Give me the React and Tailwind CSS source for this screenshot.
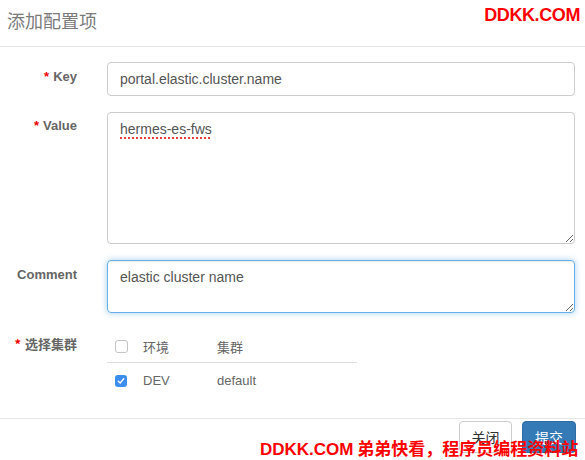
import React from "react";

const sans = "font-['Liberation_Sans','Noto_Sans_CJK_SC',sans-serif]";
const cjk = "font-['Noto_Sans_CJK_SC',sans-serif]";

function Check({ checked }) {
  if (checked) {
    return (
      <span className="flex h-[12px] w-[12px] items-center justify-center rounded-[3px] bg-[#3b8ef0]">
        <svg width="8" height="8" viewBox="0 0 8 8" fill="none">
          <path d="M1.3 4.2 L3.2 6 L6.7 1.8" stroke="#fff" strokeWidth="1.4" strokeLinecap="round" strokeLinejoin="round" />
        </svg>
      </span>
    );
  }
  return <span className="block h-[13px] w-[13px] rounded-[3px] border border-[#c4c4c4] bg-white" />;
}

function Label({ star, children, className = "" }) {
  return (
    <div className={`w-[77px] shrink-0 text-right text-[13px] font-bold leading-[16px] text-[#666] ${className}`}>
      {star && <span className="mr-[4px] text-[#e00]">*</span>}
      {children}
    </div>
  );
}

export default function App() {
  return (
    <div className={`relative h-[460px] w-[585px] overflow-hidden bg-white ${sans}`}>
      {/* HEADER */}
      <div className="h-[47px] border-b border-[#e5e5e5] px-[7px] pt-[9px]">
        <h4 className={`text-[18px] leading-[22px] text-[#7a7a7a] ${cjk}`}>添加配置项</h4>
      </div>

      {/* BODY */}
      <div className="pt-[15px]">
        <div className="flex">
          <Label star className="pt-[7px]">Key</Label>
          <div className="ml-[30px] flex h-[34px] w-[468px] items-center rounded-[4px] border border-[#ccc] px-[12px] text-[14px] text-[#555]">
            portal.elastic.cluster.name
          </div>
        </div>

        <div className="mt-[16px] flex">
          <Label star className="pt-[6px]">Value</Label>
          <textarea
            readOnly
            defaultValue="hermes-es-fws"
            className="ml-[30px] h-[132px] w-[468px] rounded-[4px] border border-[#ccc] px-[12px] py-[6px] text-[14px] leading-[20px] text-[#555] underline decoration-[#e23b3b] decoration-dotted decoration-2 underline-offset-[3px] outline-none"
          />
        </div>

        <div className="mt-[16px] flex">
          <Label className="pt-[7px]">Comment</Label>
          <textarea
            readOnly
            defaultValue="elastic cluster name"
            className="ml-[30px] h-[53px] w-[468px] rounded-[4px] border border-[#66afe9] px-[12px] py-[6px] text-[14px] leading-[20px] text-[#555] shadow-[inset_0_1px_1px_rgba(0,0,0,0.075),0_0_6px_rgba(102,175,233,0.6)] outline-none"
          />
        </div>

        <div className="mt-[18px] flex">
          <Label star className={`pt-[5px] ${cjk}`}>选择集群</Label>
          <div className={`ml-[30px] w-[250px] text-[13px] text-[#666] ${cjk}`}>
            <div className="flex h-[32px] items-center border-b border-[#ddd] pl-[8px]">
              <Check />
              <span className="ml-[15px] w-[74px]">环境</span>
              <span>集群</span>
            </div>
            <div className={`flex h-[36px] items-center pl-[8px] ${sans}`}>
              <Check checked />
              <span className="ml-[16px] w-[74px]">DEV</span>
              <span>default</span>
            </div>
          </div>
        </div>
      </div>

      {/* FOOTER */}
      <div className="absolute left-0 right-0 top-[418px] flex justify-end gap-[10px] border-t border-[#e5e5e5] pr-[9px] pt-[2px]">
        <button className={`h-[32px] w-[53px] rounded-[4px] border border-[#ccc] bg-white text-[14px] text-[#333] ${cjk}`}>关闭</button>
        <button className={`h-[32px] w-[54px] rounded-[4px] border border-[#2e6da4] bg-[#337ab7] text-[14px] text-white ${cjk}`}>提交</button>
      </div>

      {/* WATERMARKS */}
      <div className="absolute right-[5px] top-[2px] text-[18px] font-bold tracking-[-0.4px] text-[#f00]">DDKK.COM</div>
      <div className={`absolute left-[260px] top-[437px] whitespace-nowrap text-[17px] font-bold leading-[22px] text-[#f00] ${cjk}`}>
        <span className={sans}>DDKK.COM</span> 弟弟快看，程序员编程资料站
      </div>
    </div>
  );
}
